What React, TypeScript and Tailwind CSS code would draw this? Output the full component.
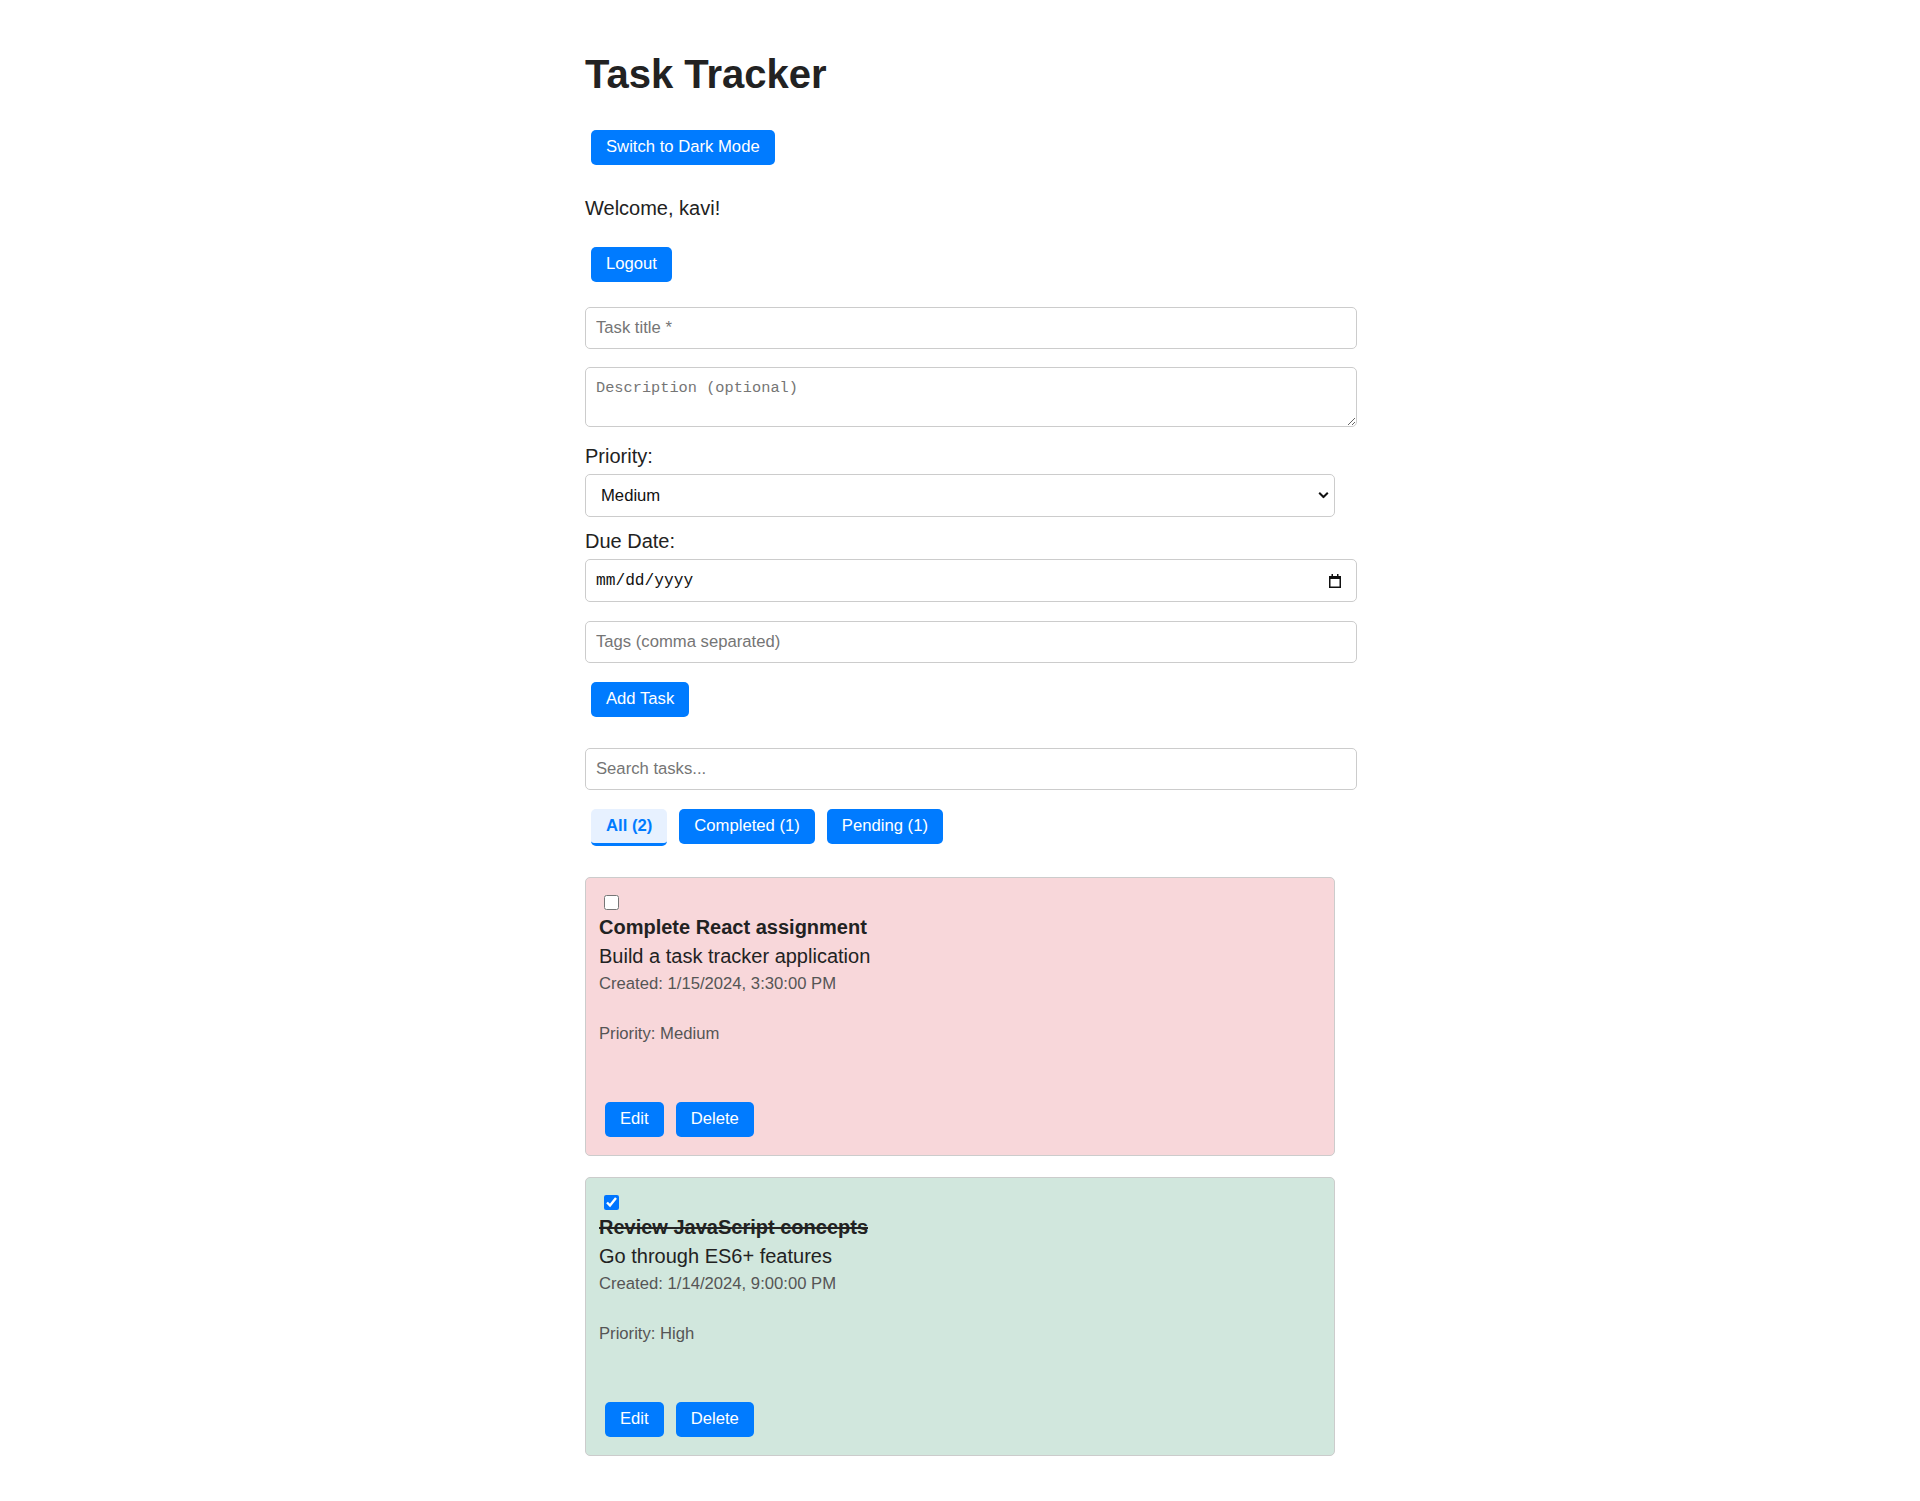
import React, { useState } from 'react';

interface Task {
  id: number;
  title: string;
  description: string;
  created: string;
  priority: string;
  completed: boolean;
}

const initialTasks: Task[] = [
  {
    id: 1,
    title: 'Complete React assignment',
    description: 'Build a task tracker application',
    created: '1/15/2024, 3:30:00 PM',
    priority: 'Medium',
    completed: false,
  },
  {
    id: 2,
    title: 'Review JavaScript concepts',
    description: 'Go through ES6+ features',
    created: '1/14/2024, 9:00:00 PM',
    priority: 'High',
    completed: true,
  },
];

const btn =
  'h-[35px] px-[15px] rounded-[5px] bg-[#007bff] text-white text-[16.67px] leading-none inline-flex items-center cursor-pointer';

const field =
  'block w-[772px] h-[42px] px-[10px] border border-[#ccc] rounded-[5px] bg-white text-[16.67px] text-[#222] placeholder:text-[#757575] outline-none';

function TaskCard({ task, onToggle }: { task: Task; onToggle: (id: number) => void }) {
  return (
    <div
      className={`w-[750px] border border-[#ccc] rounded-[5px] pt-[12px] px-[13px] pb-[18px] ${
        task.completed ? 'bg-[#d1e7dd]' : 'bg-[#f8d7da]'
      }`}
    >
      <input
        type="checkbox"
        checked={task.completed}
        onChange={() => onToggle(task.id)}
        className="block m-0 ml-[5px] mt-[5px] w-[15px] h-[15px] accent-[#0075ff]"
      />
      <div className={`mt-[5.6px] text-[20px] leading-[23px] font-bold ${task.completed ? 'line-through' : ''}`}>
        {task.title}
      </div>
      <div className="mt-[6.3px] text-[20px] leading-[23px]">{task.description}</div>
      <div className="mt-[6.1px] text-[16.67px] leading-[19.2px] text-[#555]">Created: {task.created}</div>
      <div className="mt-[30.8px] text-[16.67px] leading-[19.2px] text-[#555]">Priority: {task.priority}</div>
      <div className="mt-[58.8px] ml-[6px] flex gap-[12px]">
        <button className={btn}>Edit</button>
        <button className={btn}>Delete</button>
      </div>
    </div>
  );
}

export default function App() {
  const [tasks, setTasks] = useState<Task[]>(initialTasks);
  const [filter, setFilter] = useState('all');

  const toggle = (id: number) =>
    setTasks((prev) => prev.map((t) => (t.id === id ? { ...t, completed: !t.completed } : t)));

  const done = tasks.filter((t) => t.completed).length;
  const filters = [
    { id: 'all', label: `All (${tasks.length})` },
    { id: 'completed', label: `Completed (${done})` },
    { id: 'pending', label: `Pending (${tasks.length - done})` },
  ];

  return (
    <div className="min-h-[1501px] bg-white text-[#222] font-['Liberation_Sans',Arial,sans-serif]">
      <div className="w-[750px] mx-auto pt-[51px] pb-[45px]">
        <h1 className="text-[40px] leading-[46px] font-bold">Task Tracker</h1>

        <div className="mt-[33px] ml-[6px]">
          <button className={btn}>Switch to Dark Mode</button>
        </div>

        <p className="mt-[32px] text-[20px] leading-[23px]">Welcome, kavi!</p>

        <div className="mt-[27px] ml-[6px]">
          <button className={btn}>Logout</button>
        </div>

        {/* add task form */}
        <input type="text" placeholder="Task title *" className={`mt-[25px] ${field}`} />
        <textarea
          placeholder="Description (optional)"
          className="block mt-[18px] w-[772px] h-[60px] px-[10px] pt-[11px] pb-[9px] border border-[#ccc] rounded-[5px] bg-white text-[15.3px] leading-[18px] font-['Liberation_Mono',monospace] placeholder:text-[#757575] outline-none"
        />

        <label className="block mt-[17.6px] text-[20px] leading-[23px]">Priority:</label>
        <div className="relative mt-[6.4px] w-[750px]">
          <select
            defaultValue="Medium"
            className="block w-[750px] h-[43px] pl-[15px] pr-[30px] border border-[#ccc] rounded-[5px] bg-white text-[16.67px] text-[#111] appearance-none outline-none"
          >
            <option>Low</option>
            <option>Medium</option>
            <option>High</option>
          </select>
          <svg
            className="absolute right-[6px] top-1/2 -translate-y-1/2 w-[11px] h-[7px] pointer-events-none"
            viewBox="0 0 11 7"
            fill="none"
          >
            <path d="M1.2 1.2l4.3 4.3 4.3-4.3" stroke="#111" strokeWidth="2" />
          </svg>
        </div>

        <label className="block mt-[12.6px] text-[20px] leading-[23px]">Due Date:</label>
        <div className="relative mt-[6.7px] w-[772px]">
          <input
            type="text"
            placeholder="mm/dd/yyyy"
            className="block w-[772px] h-[43px] pl-[10px] pr-[36px] border border-[#ccc] rounded-[5px] bg-white text-[16.2px] text-[#111] placeholder:text-[#111] font-['Liberation_Mono',monospace] outline-none"
          />
          {/* calendar picker icon */}
          <svg
            className="absolute right-[16px] top-1/2 -translate-y-1/2 w-[12px] h-[14px] pointer-events-none"
            viewBox="0 0 12 14"
          >
            <rect x="0.75" y="2.75" width="10.5" height="10.5" fill="none" stroke="#111" strokeWidth="1.5" />
            <rect x="0" y="2" width="12" height="3" fill="#111" />
            <rect x="2.5" y="0" width="1.5" height="2.5" fill="#111" />
            <rect x="8" y="0" width="1.5" height="2.5" fill="#111" />
          </svg>
        </div>

        <input type="text" placeholder="Tags (comma separated)" className={`mt-[19px] ${field}`} />

        <div className="mt-[19px] ml-[6px]">
          <button className={btn}>Add Task</button>
        </div>

        <input type="text" placeholder="Search tasks..." className={`mt-[31px] ${field}`} />

        {/* filters */}
        <div className="mt-[19px] ml-[6px] flex items-start gap-[12px]">
          {filters.map((f) =>
            f.id === filter ? (
              <button
                key={f.id}
                onClick={() => setFilter(f.id)}
                className="h-[37px] px-[15px] rounded-[5px] bg-[#e7f1ff] text-[#007bff] font-bold text-[16.67px] leading-none inline-flex items-center border-b-[3px] border-[#007bff] cursor-pointer"
              >
                {f.label}
              </button>
            ) : (
              <button key={f.id} onClick={() => setFilter(f.id)} className={btn}>
                {f.label}
              </button>
            )
          )}
        </div>

        {/* task list */}
        <div className="mt-[31px] flex flex-col gap-[21px]">
          {tasks
            .filter((t) => (filter === 'all' ? true : filter === 'completed' ? t.completed : !t.completed))
            .map((t) => (
              <TaskCard key={t.id} task={t} onToggle={toggle} />
            ))}
        </div>
      </div>
    </div>
  );
}
